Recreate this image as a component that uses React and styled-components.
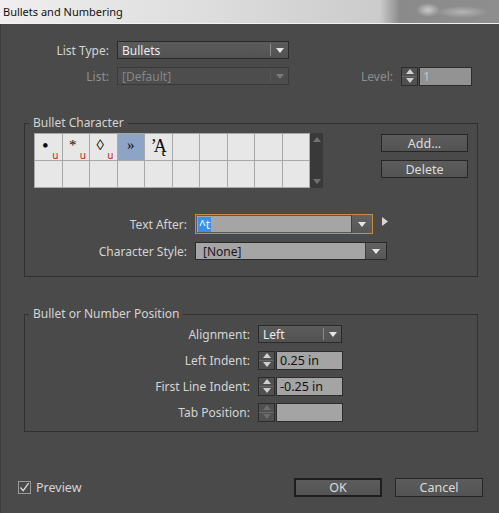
import styled, { createGlobalStyle } from "styled-components";

const GlobalStyle = createGlobalStyle`
  html, body {
    margin: 0;
    padding: 0;
    background: #4a4a4a;
  }
  body {
    font-family: "Noto Sans", "Open Sans", sans-serif;
    font-size: 12px;
  }
`;

const bullets = [
    { ch: "•", unicode: true, size: 19 },
    { ch: "*", unicode: true },
    { ch: "◊", unicode: true },
    { ch: "»", selected: true },
    { ch: "ʼĄ", size: 18, tight: true },
];

function Caret({ color = "#e8e8e8", dir = "down" }) {
    if (dir === "right") {
        return (
            <svg width="6" height="9" viewBox="0 0 6 9">
                <path d="M0 0L6 4.5L0 9Z" fill={color} />
            </svg>
        );
    }
    return (
        <svg width="8" height="5" viewBox="0 0 8 5">
            <path d={dir === "up" ? "M0 5H8L4 0Z" : "M0 0H8L4 5Z"} fill={color} />
        </svg>
    );
}

function Dropdown({ width, height = 18, value, disabled, light, focus, divider }) {
    const arrowColor = disabled ? "#7a7a7a" : "#e6e6e6";
    return (
        <DropBox $w={width} $h={height} $light={light} $disabled={disabled} $focus={focus}>
            <DropValue $light={light} $disabled={disabled}>{value}</DropValue>
            {divider && <DropDivider $disabled={disabled} />}
            <DropArrow $light={light}>
                <Caret color={arrowColor} />
            </DropArrow>
        </DropBox>
    );
}

function Spinner({ disabled }) {
    const c = disabled ? "#6c6c6c" : "#d0d0d0";
    return (
        <SpinBox>
            <SpinHalf><Caret dir="up" color={c} /></SpinHalf>
            <SpinHalf $bottom><Caret color={c} /></SpinHalf>
        </SpinBox>
    );
}

function App() {
    const cells = [];
    for (let i = 0; i < 20; i++) {
        const b = bullets[i];
        cells.push(
            <Cell key={i} $selected={b && b.selected}>
                {b && <Glyph $size={b.size} $tight={b.tight} $uni={b.unicode}>{b.ch}</Glyph>}
                {b && b.unicode && <UniMark>u</UniMark>}
            </Cell>
        );
    }

    return (
        <Window>
            <GlobalStyle />
            <TitleBar>Bullets and Numbering</TitleBar>
            <Body>
                <FormRow>
                    <Label $w={108}>List Type:</Label>
                    <Dropdown width={172} value="Bullets" divider />
                </FormRow>
                <FormRow $mt={8} $pr={27}>
                    <Label $w={108} $disabled>List:</Label>
                    <Dropdown width={172} value="[Default]" disabled divider />
                    <LevelGroup>
                        <Label $disabled>Level:</Label>
                        <Spinner />
                        <NumInput $w={53} $disabled>1</NumInput>
                    </LevelGroup>
                </FormRow>

                <Group $mt={30} $pt={2} $pb={16}>
                    <Legend>Bullet Character</Legend>
                    <CharRow>
                        <CharGrid>{cells}</CharGrid>
                        <ScrollTrack>
                            <Caret dir="up" color="#707070" />
                            <Caret color="#707070" />
                        </ScrollTrack>
                        <SideButtons>
                            <Button $w={87}>Add...</Button>
                            <Button $w={87}>Delete</Button>
                        </SideButtons>
                    </CharRow>
                    <FormRow $mt={26} $h={20}>
                        <Label $w={153}>Text After:</Label>
                        <Dropdown
                            width={178}
                            height={20}
                            light
                            focus
                            value={<Highlight>^t</Highlight>}
                        />
                        <MoreArrow>
                            <Caret dir="right" color="#d6d6d6" />
                        </MoreArrow>
                    </FormRow>
                    <FormRow $mt={8}>
                        <Label $w={153}>Character Style:</Label>
                        <Dropdown width={192} light value="[None]" />
                    </FormRow>
                </Group>

                <Group $mt={29} $pt={3} $pb={10}>
                    <Legend>Bullet or Number Position</Legend>
                    <FormRow>
                        <Label $w={216}>Alignment:</Label>
                        <Dropdown width={84} value="Left" divider />
                    </FormRow>
                    <FormRow $mt={8}>
                        <Label $w={216}>Left Indent:</Label>
                        <Spinner />
                        <NumInput $w={67}>0.25 in</NumInput>
                    </FormRow>
                    <FormRow $mt={8}>
                        <Label $w={216}>First Line Indent:</Label>
                        <Spinner />
                        <NumInput $w={67}>-0.25 in</NumInput>
                    </FormRow>
                    <FormRow $mt={8}>
                        <Label $w={216}>Tab Position:</Label>
                        <Spinner disabled />
                        <NumInput $w={67}></NumInput>
                    </FormRow>
                </Group>

                <Footer>
                    <CheckLabel>
                        <CheckBox>
                            <svg width="11" height="11" viewBox="0 0 11 11">
                                <path d="M1.5 5.5L4.2 8.6L9.6 1.2" stroke="#dcdcdc" strokeWidth="1.3" fill="none" />
                            </svg>
                        </CheckBox>
                        Preview
                    </CheckLabel>
                    <FooterButtons>
                        <Button $w={88} $h={19} $default>OK</Button>
                        <Button $w={88} $h={19}>Cancel</Button>
                    </FooterButtons>
                </Footer>
            </Body>
        </Window>
    );
}

const Window = styled.div`
    width: 499px;
    height: 513px;
    display: flex;
    flex-direction: column;
    overflow: hidden;
`

const TitleBar = styled.div`
    height: 24px;
    flex-shrink: 0;
    box-sizing: border-box;
    padding-left: 3px;
    display: flex;
    align-items: center;
    color: #111;
    font-size: 11px;
    border-bottom: 1px solid #f2f2f2;
    background:
        radial-gradient(ellipse 12px 7px at 428px 10px, rgba(255,255,255,0.55), rgba(255,255,255,0)),
        radial-gradient(ellipse 26px 6px at 462px 12px, rgba(255,255,255,0.35), rgba(255,255,255,0)),
        linear-gradient(to right, #f0eeee 0, #dedede 200px, #cbcbcb 380px, #8a8a8a 400px, #8e8e8e 100%);
`

const Body = styled.div`
    flex: 1;
    background: #4a4a4a;
    padding-top: 17px;
    border-left: 1px solid #3e3e3e;
    box-sizing: border-box;
`

const FormRow = styled.div`
    display: flex;
    align-items: center;
    height: ${p => p.$h || 18}px;
    margin-top: ${p => p.$mt || 0}px;
    padding-right: ${p => p.$pr || 0}px;
`

const Label = styled.span`
    ${p => p.$w ? `width: ${p.$w}px; flex-shrink: 0;` : ""}
    text-align: right;
    margin-right: 8px;
    color: ${p => p.$disabled ? "#8e8e8e" : "#d4d4d4"};
    white-space: nowrap;
`

const DropBox = styled.div`
    display: flex;
    width: ${p => p.$w}px;
    height: ${p => p.$h}px;
    box-sizing: border-box;
    border: 1px solid ${p => p.$focus ? "#c78a3e" : p.$disabled ? "#3a3a3a" : "#2a2a2a"};
    background: ${p => p.$light ? "#a5a5a5" : p.$disabled ? "#4d4d4d" : "linear-gradient(#5b5b5b, #525252)"};
    ${p => p.$focus ? "box-shadow: inset 0 0 0 1px #5a5a5a;" : ""}
`

const DropValue = styled.div`
    flex: 1;
    display: flex;
    align-items: center;
    padding-left: ${p => p.$light ? 7 : 4}px;
    color: ${p => p.$light ? "#1e1424" : p.$disabled ? "#858585" : "#ececec"};
    overflow: hidden;
    white-space: nowrap;
`

const DropDivider = styled.div`
    width: 1px;
    margin: 2px 0;
    background: ${p => p.$disabled ? "#555" : "#8a8a8a"};
`

const DropArrow = styled.div`
    width: ${p => p.$light ? 20 : 17}px;
    display: flex;
    align-items: center;
    justify-content: center;
    background: ${p => p.$light ? "linear-gradient(#626262, #575757)" : "transparent"};
    ${p => p.$light ? "border-left: 1px solid #3c3c3c;" : ""}
`

const Highlight = styled.span`
    background: #3b8fe8;
    color: #fff;
    padding: 0 1px;
    margin-left: -5px;
    line-height: 15px;
`

const MoreArrow = styled.div`
    margin-left: 9px;
    margin-top: -6px;
    display: flex;
`

const LevelGroup = styled.div`
    margin-left: auto;
    display: flex;
    align-items: center;
`

const SpinBox = styled.div`
    width: 17px;
    height: 19px;
    box-sizing: border-box;
    border: 1px solid #2c2c2c;
    background: #505050;
    display: flex;
    flex-direction: column;
    margin-right: 1px;
    flex-shrink: 0;
`

const SpinHalf = styled.div`
    flex: 1;
    display: flex;
    align-items: center;
    justify-content: center;
    ${p => p.$bottom ? "border-top: 1px solid #6a6a6a;" : ""}
`

const NumInput = styled.div`
    width: ${p => p.$w}px;
    height: 19px;
    box-sizing: border-box;
    border: 1px solid #2c2c2c;
    background: ${p => p.$disabled ? "#939393" : "#a4a4a4"};
    color: ${p => p.$disabled ? "#c4c4c4" : "#111"};
    padding-left: 3px;
    display: flex;
    align-items: center;
    font-size: 12.5px;
`

const Group = styled.fieldset`
    margin: ${p => p.$mt}px 21px 0 23px;
    padding: ${p => p.$pt}px 8px ${p => p.$pb}px 9px;
    border: 1px solid #313131;
    min-width: 0;
`

const Legend = styled.legend`
    padding: 0 4px;
    margin-left: -5px;
    line-height: 16px;
    color: #d4d4d4;
`

const CharRow = styled.div`
    display: flex;
    align-items: flex-start;
`

const CharGrid = styled.div`
    width: 276px;
    height: 55px;
    box-sizing: border-box;
    display: grid;
    grid-template-columns: repeat(10, 1fr);
    grid-template-rows: repeat(2, 1fr);
    gap: 1px;
    padding: 1px;
    background: #a8a8a8;
`

const Cell = styled.div`
    position: relative;
    background: ${p => p.$selected ? "#8ea4c7" : "#e7e7e7"};
    display: flex;
    align-items: center;
    justify-content: center;
`

const Glyph = styled.span`
    font-family: "Liberation Serif", "DejaVu Serif", serif;
    font-size: ${p => p.$size || 15}px;
    line-height: 1;
    color: #0c0c0c;
    margin-right: ${p => p.$uni ? 6 : 0}px;
    margin-top: -3px;
    letter-spacing: ${p => p.$tight ? "-3px" : "0"};
    ${p => p.$tight ? "margin-left: -2px;" : ""}
`

const UniMark = styled.span`
    position: absolute;
    right: 3px;
    bottom: 0;
    font-size: 10px;
    line-height: 10px;
    color: #d01818;
`

const ScrollTrack = styled.div`
    width: 13px;
    height: 55px;
    background: #393939;
    display: flex;
    flex-direction: column;
    align-items: center;
    justify-content: space-between;
    padding: 4px 0;
    box-sizing: border-box;
`

const SideButtons = styled.div`
    margin-left: 58px;
    margin-top: 1px;
    display: flex;
    flex-direction: column;
    gap: 8px;
`

const Button = styled.div`
    width: ${p => p.$w}px;
    height: ${p => p.$h || 18}px;
    box-sizing: border-box;
    border: ${p => p.$default ? "2px solid #1e1e1e" : "1px solid #262626"};
    background: linear-gradient(#5c5c5c, #535353);
    color: #dcdcdc;
    display: flex;
    align-items: center;
    justify-content: center;
    font-size: 12.5px;
`

const Footer = styled.div`
    margin-top: 46px;
    height: 19px;
    display: flex;
    align-items: center;
    padding: 0 16px 0 17px;
`

const CheckLabel = styled.div`
    display: flex;
    align-items: center;
    color: #d4d4d4;
    font-size: 12.5px;
`

const CheckBox = styled.div`
    width: 13px;
    height: 13px;
    box-sizing: border-box;
    border: 1px solid #9a9a9a;
    margin-right: 5px;
    display: flex;
    align-items: center;
    justify-content: center;
`

const FooterButtons = styled.div`
    margin-left: auto;
    display: flex;
    gap: 13px;
`

export default App
